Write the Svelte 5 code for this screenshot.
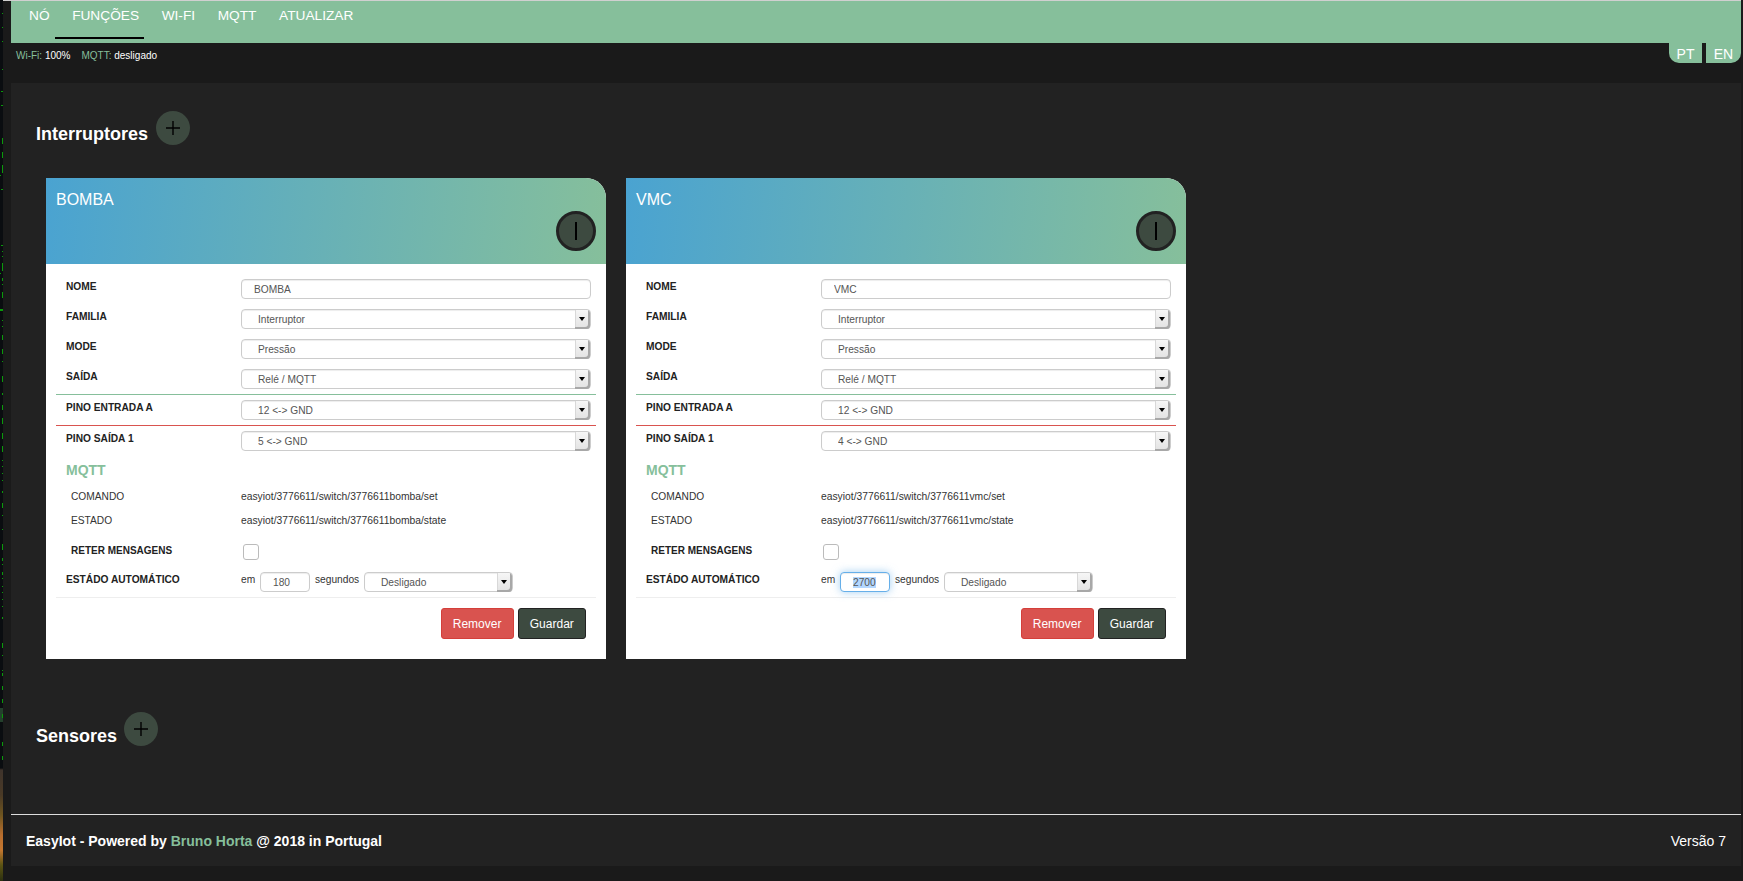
<script>
  import { onMount } from 'svelte';

  let focusedInput;

  const navItems = ['NÓ', 'FUNÇÕES', 'WI-FI', 'MQTT', 'ATUALIZAR'];

  const cards = [
    { name: 'BOMBA', slug: 'bomba', output: '5 <-> GND', seconds: '180', focused: false },
    { name: 'VMC', slug: 'vmc', output: '4 <-> GND', seconds: '2700', focused: true }
  ];

  // terminal window peeking out behind the browser: [y, height, x, width]
  const ticks = [
    [13,1,2,1],[27,1,2,1],[41,1,2,1],[69,1,2,1],[91,1,1,2],[105,1,1,2],[138,6,2,1],[152,6,2,1],
    [165,8,2,1],[175,1,0,1],[189,1,1,2],[245,1,1,2],[251,1,2,1],[256,1,2,1],[263,8,2,1],[273,1,0,1],
    [278,3,2,1],[284,1,2,1],[292,6,2,1],[309,2,0,3],[320,1,2,1],[326,1,2,1],[335,5,2,1],[349,5,2,1],
    [361,1,2,1],[376,6,2,1],[393,2,2,1],[405,5,2,1],[418,6,2,1],[433,6,2,1],[446,6,2,1],[460,1,2,1],
    [466,1,2,1],[473,1,2,1],[480,1,2,1],[491,2,2,1],[503,5,2,1],[515,1,2,1],[529,1,2,1],[544,6,2,1],
    [558,3,2,1],[564,1,2,1],[572,3,2,1],[578,1,2,1],[586,1,2,1],[592,1,2,1],[599,1,2,1],[606,1,2,1],
    [617,2,2,1],[643,5,2,1],[655,1,2,1],[670,1,2,1],[673,3,2,1],[686,4,2,1],[699,4,2,1],[714,4,2,1],
    [742,4,2,1],[756,4,2,1]
  ];

  onMount(() => {
    focusedInput.focus();
    focusedInput.select();
  });
</script>

{#snippet selectBox(value, extra = '')}
  <div class="select {extra}">
    <select>
      <option>{value}</option>
    </select>
    <span class="select-arrow"></span>
  </div>
{/snippet}

{#snippet addButton()}
  <button type="button" class="add" aria-label="Adicionar">
    <svg width="16" height="16" viewBox="0 0 16 16"><path d="M8 1v14M1 8h14" stroke="#000" stroke-width="1.4" fill="none" /></svg>
  </button>
{/snippet}

<div class="page">
  <div class="behind">
    <svg width="3" height="881" viewBox="0 0 3 881">
      {#each ticks as t}
        <rect x={t[2]} y={t[0]} width={t[3]} height={t[1]} fill="#0a9a0a" />
      {/each}
    </svg>
  </div>

  <div class="shell">
    <div class="topline"></div>

    <nav class="nav">
      {#each navItems as item, i}
        <a href="#top" class="nav-item" class:active={i === 1}>{item}</a>
      {/each}
    </nav>

    <div class="status">
      <div class="status-info">
        <span><em>Wi-Fi:</em> 100%</span>
        <span><em>MQTT:</em> desligado</span>
      </div>
      <div class="langs">
        <span class="lang lang-pt">PT</span>
        <span class="lang lang-en">EN</span>
      </div>
    </div>

    <main class="main">
      <div class="section-head">
        <h2>Interruptores</h2>
        {@render addButton()}
      </div>

      <div class="cards">
        {#each cards as card}
          <section class="card">
            <header class="card-head">
              <h3>{card.name}</h3>
              <div class="power"><span></span></div>
            </header>

            <div class="card-body">
              <div class="row">
                <label>NOME</label>
                <input class="text" type="text" value={card.name} />
              </div>
              <div class="row">
                <label>FAMILIA</label>
                {@render selectBox('Interruptor')}
              </div>
              <div class="row">
                <label>MODE</label>
                {@render selectBox('Pressão')}
              </div>
              <div class="row row-last">
                <label>SAÍDA</label>
                {@render selectBox('Relé / MQTT')}
              </div>
              <div class="row pin pin-in">
                <label>PINO ENTRADA A</label>
                {@render selectBox('12 <-> GND')}
              </div>
              <div class="row pin pin-out">
                <label>PINO SAÍDA 1</label>
                {@render selectBox(card.output)}
              </div>

              <h4>MQTT</h4>
              <div class="row topic first-topic">
                <span class="topic-name">COMANDO</span>
                <span class="topic-value">easyiot/3776611/switch/3776611{card.slug}/set</span>
              </div>
              <div class="row topic">
                <span class="topic-name">ESTADO</span>
                <span class="topic-value">easyiot/3776611/switch/3776611{card.slug}/state</span>
              </div>
              <div class="row retain">
                <label class="indent">RETER MENSAGENS</label>
                <input class="check" type="checkbox" />
              </div>
              <div class="row auto">
                <label>ESTÁDO AUTOMÁTICO</label>
                <div class="auto-controls">
                  <span class="em">em</span>
                  {#if card.focused}
                    <input class="seconds is-focused" type="text" value={card.seconds} bind:this={focusedInput} />
                  {:else}
                    <input class="seconds" type="text" value={card.seconds} />
                  {/if}
                  <span class="unit">segundos</span>
                  {@render selectBox('Desligado', 'select-auto')}
                </div>
              </div>

              <div class="actions">
                <button type="button" class="btn btn-red">Remover</button>
                <button type="button" class="btn btn-dark">Guardar</button>
              </div>
            </div>
          </section>
        {/each}
      </div>

      <div class="section-head sensors">
        <h2>Sensores</h2>
        {@render addButton()}
      </div>

      <footer class="footer">
        <span class="credit">EasyIot - Powered by <b>Bruno Horta</b> @ 2018 in Portugal</span>
        <span class="version">Versão 7</span>
      </footer>
    </main>

    <div class="bottom"></div>
  </div>
</div>

<style>
  :global(body) {
    background: #1a1a1a;
    font-family: "Liberation Sans", Arial, sans-serif;
    overflow: hidden;
  }

  .page {
    display: flex;
    height: 881px;
    overflow: hidden;
  }

  .behind {
    width: 3px;
    flex: none;
    line-height: 0;
    background: linear-gradient(
      to bottom,
      #0a0d10 0,
      #0a0d10 708px,
      #24402c 708px,
      #24402c 722px,
      #0a0d10 722px,
      #0a0d10 768px,
      #3f342c 770px,
      #4a3a26 795px,
      #6e5520 815px,
      #b86e2e 835px,
      #c4772f 850px,
      #5c5414 865px,
      #2c3010 881px
    );
  }

  .shell {
    flex: 1;
    display: flex;
    flex-direction: column;
    padding: 0 2px 0 8px;
    min-width: 0;
  }

  .topline {
    height: 1px;
    margin-left: -8px;
    background: #d0d0d0;
    flex: none;
  }

  .nav {
    display: flex;
    gap: 22.6px;
    height: 42px;
    padding-left: 18px;
    background: #86bf9b;
    flex: none;
  }

  .nav-item {
    position: relative;
    color: #fff;
    font-size: 13.7px;
    line-height: 30px;
    height: 30px;
    text-decoration: none;
  }

  .nav-item.active::after {
    content: "";
    position: absolute;
    left: -17px;
    right: -5px;
    top: 36px;
    height: 2px;
    background: #000;
  }

  .status {
    display: flex;
    justify-content: space-between;
    align-items: flex-start;
    height: 40px;
    flex: none;
  }

  .status-info {
    display: flex;
    gap: 11px;
    padding: 7px 0 0 5px;
    color: #fff;
    font-size: 10px;
    line-height: 12px;
  }

  .status-info em {
    font-style: normal;
    color: #86bf9b;
  }

  .langs {
    display: flex;
    gap: 4px;
  }

  .lang {
    height: 20px;
    line-height: 22px;
    background: #86bf9b;
    color: #fff;
    font-size: 14px;
    text-align: center;
  }

  .lang-pt {
    width: 33px;
    border-bottom-left-radius: 10px;
  }

  .lang-en {
    width: 35px;
    border-bottom-right-radius: 10px;
  }

  .main {
    flex: 1;
    display: flex;
    flex-direction: column;
    background: #222;
    min-height: 0;
  }

  .section-head {
    display: flex;
    align-items: flex-end;
    gap: 8px;
    margin-top: 28px;
    padding-left: 25px;
  }

  .section-head h2 {
    margin: 0;
    color: #fff;
    font-size: 18px;
    line-height: 24px;
    font-weight: bold;
  }

  .section-head.sensors {
    gap: 7px;
    margin-top: 53px;
  }

  .sensors .add {
    margin-bottom: 2px;
  }

  .add {
    display: flex;
    align-items: center;
    justify-content: center;
    width: 34px;
    height: 34px;
    margin: 0 0 1px;
    padding: 0;
    border: 0;
    border-radius: 50%;
    background: #3d4a40;
  }

  .cards {
    display: flex;
    gap: 20px;
    margin: 32px 0 0 35px;
  }

  .card {
    width: 560px;
    background: #fff;
    border-top-right-radius: 20px;
  }

  .card-head {
    position: relative;
    height: 86px;
    padding: 12px 10px 0;
    box-sizing: border-box;
    background: linear-gradient(95deg, #4aa3d1, #86bf9b);
    border-top-right-radius: 20px;
  }

  .card-head h3 {
    margin: 0;
    color: #fff;
    font-size: 16px;
    font-weight: normal;
    line-height: 20px;
  }

  .power {
    position: absolute;
    right: 10px;
    top: 33px;
    display: flex;
    align-items: center;
    justify-content: center;
    width: 40px;
    height: 40px;
    box-sizing: border-box;
    border: 3px solid #222;
    border-radius: 50%;
    background: #3d4a40;
  }

  .power span {
    width: 2px;
    height: 18px;
    background: #000;
  }

  .card-body {
    padding: 15px 10px 20px;
    color: #333;
    font-size: 10.2px;
  }

  .row {
    display: grid;
    grid-template-columns: 175px 350px;
    padding-left: 10px;
    margin-bottom: 10px;
    height: 20px;
  }

  .row label {
    padding-top: 1px;
    font-weight: bold;
    color: #222;
    line-height: 14px;
  }

  .row-last {
    margin-bottom: 5px;
  }

  .pin {
    box-sizing: border-box;
    height: 26px;
    margin-bottom: 0;
    padding-top: 5px;
    border-top: 1px solid;
  }

  .pin-in {
    border-color: #86bf9b;
    margin-bottom: 5px;
  }

  .pin-out {
    border-color: #d9534f;
  }

  .text,
  .seconds,
  .select select {
    box-sizing: border-box;
    height: 20px;
    margin: 0;
    border: 1px solid #ccc;
    border-radius: 4px;
    background: #fff;
    box-shadow: inset 0 1px 1px rgba(0, 0, 0, .075);
    color: #555;
    font-family: inherit;
    font-size: 10.2px;
    outline: 0;
  }

  .text {
    width: 350px;
    padding: 0 12px;
  }

  .select {
    position: relative;
    width: 350px;
    height: 20px;
  }

  .select select {
    appearance: none;
    width: 100%;
    padding: 0 16px;
  }

  .select-arrow {
    position: absolute;
    top: 1px;
    right: 1px;
    width: 15px;
    height: 19px;
    box-sizing: border-box;
    background: linear-gradient(#f6f6f6, #e2e2e2);
    box-shadow: inset -2px -2px 0 #a8a8a8, inset 1px 0 0 #d8d8d8;
    border-radius: 0 3px 3px 0;
  }

  .select-arrow::after {
    content: "";
    position: absolute;
    left: 4px;
    top: 7px;
    border-style: solid;
    border-width: 4px 3px 0;
    border-color: #000 transparent transparent;
  }

  .select-auto {
    width: 149px;
    flex: none;
  }

  h4 {
    margin: 11px 0 0 10px;
    color: #86bf9b;
    font-size: 14px;
    font-weight: bold;
    line-height: 16px;
  }

  .topic {
    height: 24px;
    margin: 0;
    line-height: 24px;
  }

  .first-topic {
    margin-top: 7px;
  }

  .topic-name {
    padding-left: 5px;
  }

  .topic-value {
    font-size: 10.3px;
  }

  .retain {
    height: 16px;
    margin: 11px 0 0;
    align-items: start;
  }

  .row .indent {
    padding: 0 0 0 5px;
    font-size: 10px;
  }

  .check {
    appearance: none;
    box-sizing: border-box;
    width: 16px;
    height: 16px;
    margin: 0 0 0 2px;
    border: 1px solid #bbb;
    border-radius: 3px;
    background: #fff;
  }

  .auto {
    margin: 12px 0 0;
  }

  .auto-controls {
    display: flex;
    align-items: flex-start;
    line-height: 15px;
  }

  .em {
    width: 19px;
    flex: none;
  }

  .unit {
    width: 49px;
    flex: none;
    white-space: nowrap;
  }

  .seconds {
    width: 50px;
    padding: 0 12px;
    margin-right: 5px;
    flex: none;
  }

  .seconds.is-focused {
    border-color: #66afe9;
    box-shadow: inset 0 1px 1px rgba(0, 0, 0, .075), 0 0 8px rgba(102, 175, 233, .6);
  }

  .seconds::selection {
    background: #b3d7ff;
    color: #555;
  }

  .actions {
    display: flex;
    justify-content: flex-end;
    gap: 4px;
    margin-top: 5px;
    padding: 10px 10px 0 0;
    border-top: 1px solid #eee;
  }

  .btn {
    height: 31px;
    padding: 0 11.2px;
    border: 1px solid;
    border-radius: 3px;
    color: #fff;
    font-family: inherit;
    font-size: 12px;
  }

  .btn-red {
    background: #d9534f;
    border-color: #d43f3a;
  }

  .btn-dark {
    background: #3d4a40;
    border-color: #222;
  }

  .footer {
    display: flex;
    justify-content: space-between;
    align-items: center;
    margin-top: auto;
    height: 52px;
    box-sizing: border-box;
    padding: 0 15px;
    border-top: 1px solid #ddd;
    color: #fff;
    font-size: 14px;
  }

  .credit {
    font-weight: bold;
  }

  .credit b {
    color: #86bf9b;
  }

  .bottom {
    height: 15px;
    flex: none;
  }
</style>
